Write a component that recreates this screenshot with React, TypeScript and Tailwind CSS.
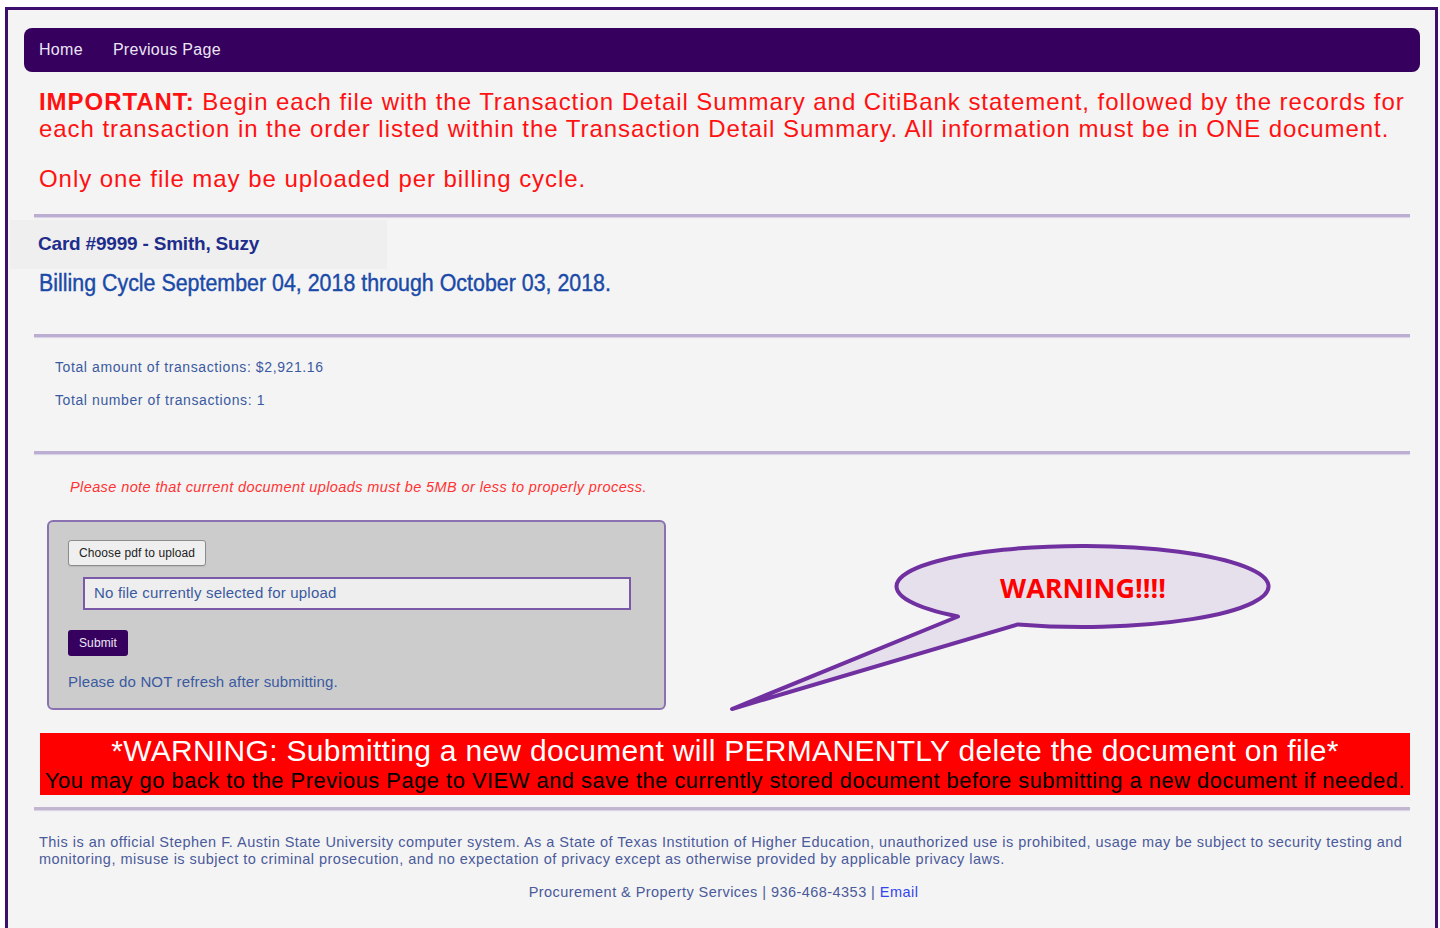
import React from 'react';

// Speech-bubble callout pointing at the upload form
function WarningBubble() {
  return (
    <div className="relative h-[180px] w-[560px]">
      <svg width="560" height="180" viewBox="0 0 560 180" className="block">
        <path
          d="M 238 77.5 A 186 40.5 0 1 1 298 85.4 L 12 170 Z"
          fill="#e6e0ec"
          stroke="#7030a0"
          strokeWidth="4"
          strokeLinejoin="round"
        />
      </svg>
      <div className="absolute left-[177px] top-[8px] flex h-[82px] w-[372px] items-center justify-center">
        <span className="font-['Open_Sans',sans-serif] text-[27px] font-bold text-[#ff0000]">
          WARNING!!!!
        </span>
      </div>
    </div>
  );
}

export default function App() {
  const sans = "font-['Liberation_Sans',Arial,sans-serif]";
  const rule = 'h-[3px] border-0 bg-[#bcaed2] shadow-[0_1px_1px_#d8d0e4]';

  return (
    <div className={`min-h-[928px] bg-white pt-[7px] pl-[5px] pr-[2px] ${sans}`}>
      <div className="min-h-[930px] border-[3px] border-b-0 border-[#3b0f6b] bg-[#f4f4f4] pl-[16px] pr-[15px] pt-[18px]">
        {/* Top navigation */}
        <nav className="flex h-[44px] items-center gap-[30px] rounded-lg bg-[#36005f] px-[15px] text-[16px] tracking-[0.3px] text-[#ece6f4]">
          <a href="#">Home</a>
          <a href="#">Previous Page</a>
        </nav>

        {/* Upload instructions */}
        <div className="px-[15px] pt-[16px] text-[24px] leading-[27px] tracking-[0.95px] text-[#ff1111]">
          <p>
            <span className="font-bold">IMPORTANT:</span> Begin each file with the Transaction Detail
            Summary and CitiBank statement, followed by the records for each transaction in the order
            listed within the Transaction Detail Summary. All information must be in ONE document.
          </p>
          <p className="mt-[23px]">Only one file may be uploaded per billing cycle.</p>
        </div>

        <hr className={`mx-[10px] mt-[22px] ${rule}`} />

        {/* Card & billing cycle */}
        <div className="-ml-[14px] mt-[3px] w-[377px] bg-[#efefef] py-[10px] pl-[28px]">
          <h2 className="whitespace-nowrap text-[19px] font-bold tracking-[-0.2px] text-[#1e2d8c]">
            Card #9999 - Smith, Suzy
          </h2>
        </div>
        <h3 className="ml-[15px] -mt-[3px] origin-left scale-x-[0.93] whitespace-nowrap text-[23px] text-[#1a4aa8] [-webkit-text-stroke:0.4px_#1a4aa8]">
          Billing Cycle September 04, 2018 through October 03, 2018.
        </h3>

        <hr className={`mx-[10px] mt-[34px] ${rule}`} />

        {/* Transaction totals */}
        <div className="ml-[31px] mt-[22px] space-y-[16px] text-[14px] leading-[17px] tracking-[0.6px] text-[#3a5aa0]">
          <p>Total amount of transactions: $2,921.16</p>
          <p>Total number of transactions: 1</p>
        </div>

        <hr className={`mx-[10px] mt-[42px] ${rule}`} />

        <p className="ml-[46px] mt-[23px] text-[14.5px] italic tracking-[0.4px] text-[#ff3333]">
          Please note that current document uploads must be 5MB or less to properly process.
        </p>

        {/* Upload form with callout */}
        <div className="relative mt-[21px]">
          <div className="ml-[23px] w-[619px] rounded-md border-2 border-[#8a72b2] bg-[#cccccc] px-[19px] pt-[18px] pb-[15px]">
            <button className="rounded-[3px] border border-[#8c8c8c] bg-[#efefef] px-[10px] py-[3px] text-[12px] tracking-[0.1px] text-[#222] shadow-[0_1px_1px_#bbb]">
              Choose pdf to upload
            </button>
            <div className="ml-[15px] mt-[11px] flex h-[33px] w-[548px] items-center border-2 border-[#7a5aa8] bg-[#eeeeee] px-[9px] text-[15px] tracking-[0.2px] text-[#3a5aa0]">
              No file currently selected for upload
            </div>
            <button className="mt-[20px] rounded-[3px] bg-[#36005f] px-[11px] py-[4px] text-[12px] tracking-[0.1px] text-[#ece6f4]">
              Submit
            </button>
            <p className="mt-[15px] text-[15px] tracking-[0.15px] text-[#3a5aa0]">
              Please do NOT refresh after submitting.
            </p>
          </div>
          <div className="absolute left-[696px] top-[19px]">
            <WarningBubble />
          </div>
        </div>

        {/* Replacement warning banner */}
        <div className="ml-[16px] mr-[10px] mt-[23px] bg-[#ff0000] pt-[2px] text-center">
          <p className="text-[30px] leading-[32px] tracking-[0.3px] text-white">
            *WARNING: Submitting a new document will PERMANENTLY delete the document on file*
          </p>
          <p className="whitespace-nowrap text-[22px] leading-[28px] tracking-[0.45px] text-black">
            You may go back to the Previous Page to VIEW and save the currently stored document before
            submitting a new document if needed.
          </p>
        </div>

        <hr className="mx-[10px] mt-[12px] h-[3px] border-0 bg-[#c0b6d0] shadow-[0_1px_1px_#d8d0e4]" />

        {/* Footer */}
        <footer className="pl-[15px] pr-[12px] pt-[24px] text-[14.5px] text-[#4a5a9a]">
          <p className="leading-[17px] tracking-[0.47px]">
            This is an official Stephen F. Austin State University computer system. As a State of Texas
            Institution of Higher Education, unauthorized use is prohibited, usage may be subject to
            security testing and monitoring, misuse is subject to criminal prosecution, and no
            expectation of privacy except as otherwise provided by applicable privacy laws.
          </p>
          <p className="mt-[14px] text-center tracking-[0.45px]">
            Procurement &amp; Property Services | 936-468-4353 |{' '}
            <a href="#" className="text-[#3344ee]">
              Email
            </a>
          </p>
        </footer>
      </div>
    </div>
  );
}
